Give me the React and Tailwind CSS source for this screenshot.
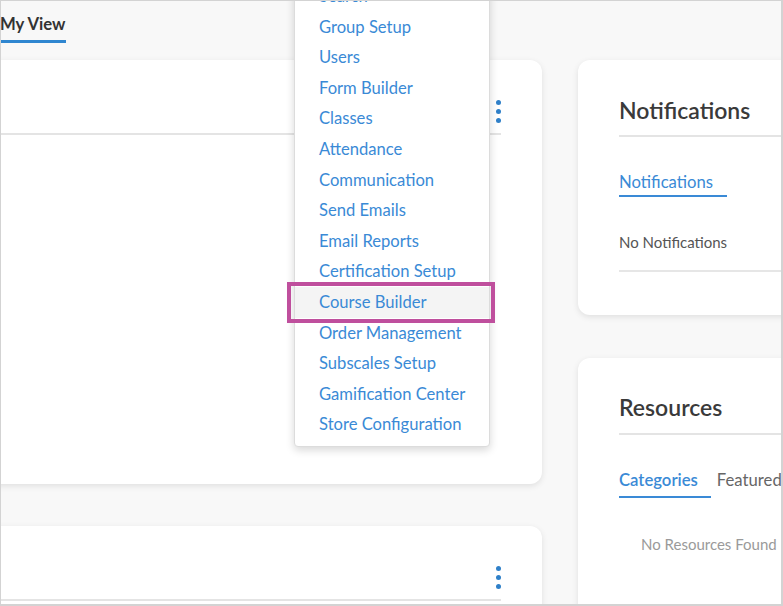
import React from "react";

const adminLinks = [
  "Search",
  "Group Setup",
  "Users",
  "Form Builder",
  "Classes",
  "Attendance",
  "Communication",
  "Send Emails",
  "Email Reports",
  "Certification Setup",
  "Course Builder",
  "Order Management",
  "Subscales Setup",
  "Gamification Center",
  "Store Configuration",
];

function KebabDots() {
  return (
    <div className="flex flex-col gap-[4px]">
      <span className="block w-[5px] h-[5px] rounded-full bg-[#2f80c9]" />
      <span className="block w-[5px] h-[5px] rounded-full bg-[#2f80c9]" />
      <span className="block w-[5px] h-[5px] rounded-full bg-[#2f80c9]" />
    </div>
  );
}

function WidgetCard({ className = "" }) {
  return (
    <div className={`bg-white rounded-r-xl shadow-[0_2px_6px_rgba(0,0,0,0.10)] ${className}`}>
      <div className="h-[75px] mr-[41px] border-b-2 border-[#e4e4e4] flex justify-end pt-[40px]">
        <KebabDots />
      </div>
    </div>
  );
}

export default function App() {
  return (
    <div className="relative w-[783px] h-[606px] overflow-hidden bg-[#f8f8f8] border-t border-l border-r-2 border-b-2 border-[#d3d3d3] font-['Lato','Liberation_Sans',sans-serif]">
      <div className="flex gap-[36px]">
        {/* left column */}
        <div className="w-[562px] -ml-[21px] shrink-0">
          <div className="h-[59px] pl-[20px] pt-[11px]">
            <span className="inline-block text-[16.7px] leading-[22px] font-bold text-[#333] pr-[1px] pb-[5px] border-b-[3px] border-[#2f86d0]">
              My View
            </span>
          </div>
          <WidgetCard className="h-[424px]" />
          <WidgetCard className="h-[200px] mt-[42px]" />
        </div>

        {/* right column */}
        <div className="w-[260px] shrink-0 pt-[59px]">
          <div className="h-[255px] bg-white rounded-l-xl shadow-[0_2px_6px_rgba(0,0,0,0.10)] pl-[41px]">
            <div className="pt-[36px] pb-[11px] border-b-2 border-[#e4e4e4]">
              <h2 className="text-[23px] leading-[28px] font-semibold text-[#3a3a3a] whitespace-nowrap">Notifications</h2>
            </div>
            <div className="mt-[35px] flex">
              <span className="text-[16.7px] leading-[20px] text-[#3a8ad6] pr-[14px] pb-[3px] border-b-2 border-[#3a8ad6]">
                Notifications
              </span>
            </div>
            <div className="mt-[36px] pb-[19px] border-b-2 border-[#e6e6e6]">
              <p className="text-[15px] leading-[18px] text-[#555]">No Notifications</p>
            </div>
          </div>

          <div className="h-[260px] mt-[43px] bg-white rounded-l-xl shadow-[0_2px_6px_rgba(0,0,0,0.10)] pl-[41px]">
            <div className="pt-[35px] pb-[12px] border-b-2 border-[#e4e4e4]">
              <h2 className="text-[23px] leading-[28px] font-semibold text-[#3a3a3a]">Resources</h2>
            </div>
            <div className="mt-[35px] flex items-start gap-[6px] whitespace-nowrap">
              <span className="text-[16.7px] leading-[20px] font-semibold text-[#3a8ad6] pr-[13px] pb-[6px] border-b-2 border-[#3a8ad6]">
                Categories
              </span>
              <span className="text-[16.7px] leading-[20px] text-[#666]">Featured</span>
            </div>
            <p className="mt-[37px] pl-[22px] text-[15px] leading-[18px] text-[#9a9a9a] whitespace-nowrap">
              No Resources Found
            </p>
          </div>
        </div>
      </div>

      {/* admin dropdown */}
      <div className="absolute left-[293px] top-[-21px] w-[196px] bg-white border border-[#dcdcdc] rounded-b-[4px] shadow-[0_3px_8px_rgba(0,0,0,0.16)] pb-[6px]">
        {adminLinks.map((label) => (
          <div
            key={label}
            className={`h-[30.6px] leading-[30.6px] pl-[24px] text-[16.6px] text-[#3a8ad6] whitespace-nowrap ${
              label === "Course Builder" ? "bg-[#f4f4f4]" : ""
            }`}
          >
            {label}
          </div>
        ))}
      </div>

      {/* highlight frame */}
      <div className="absolute left-[286px] top-[281px] w-[208px] h-[41px] border-4 border-[#bf4f9d]" />
    </div>
  );
}
